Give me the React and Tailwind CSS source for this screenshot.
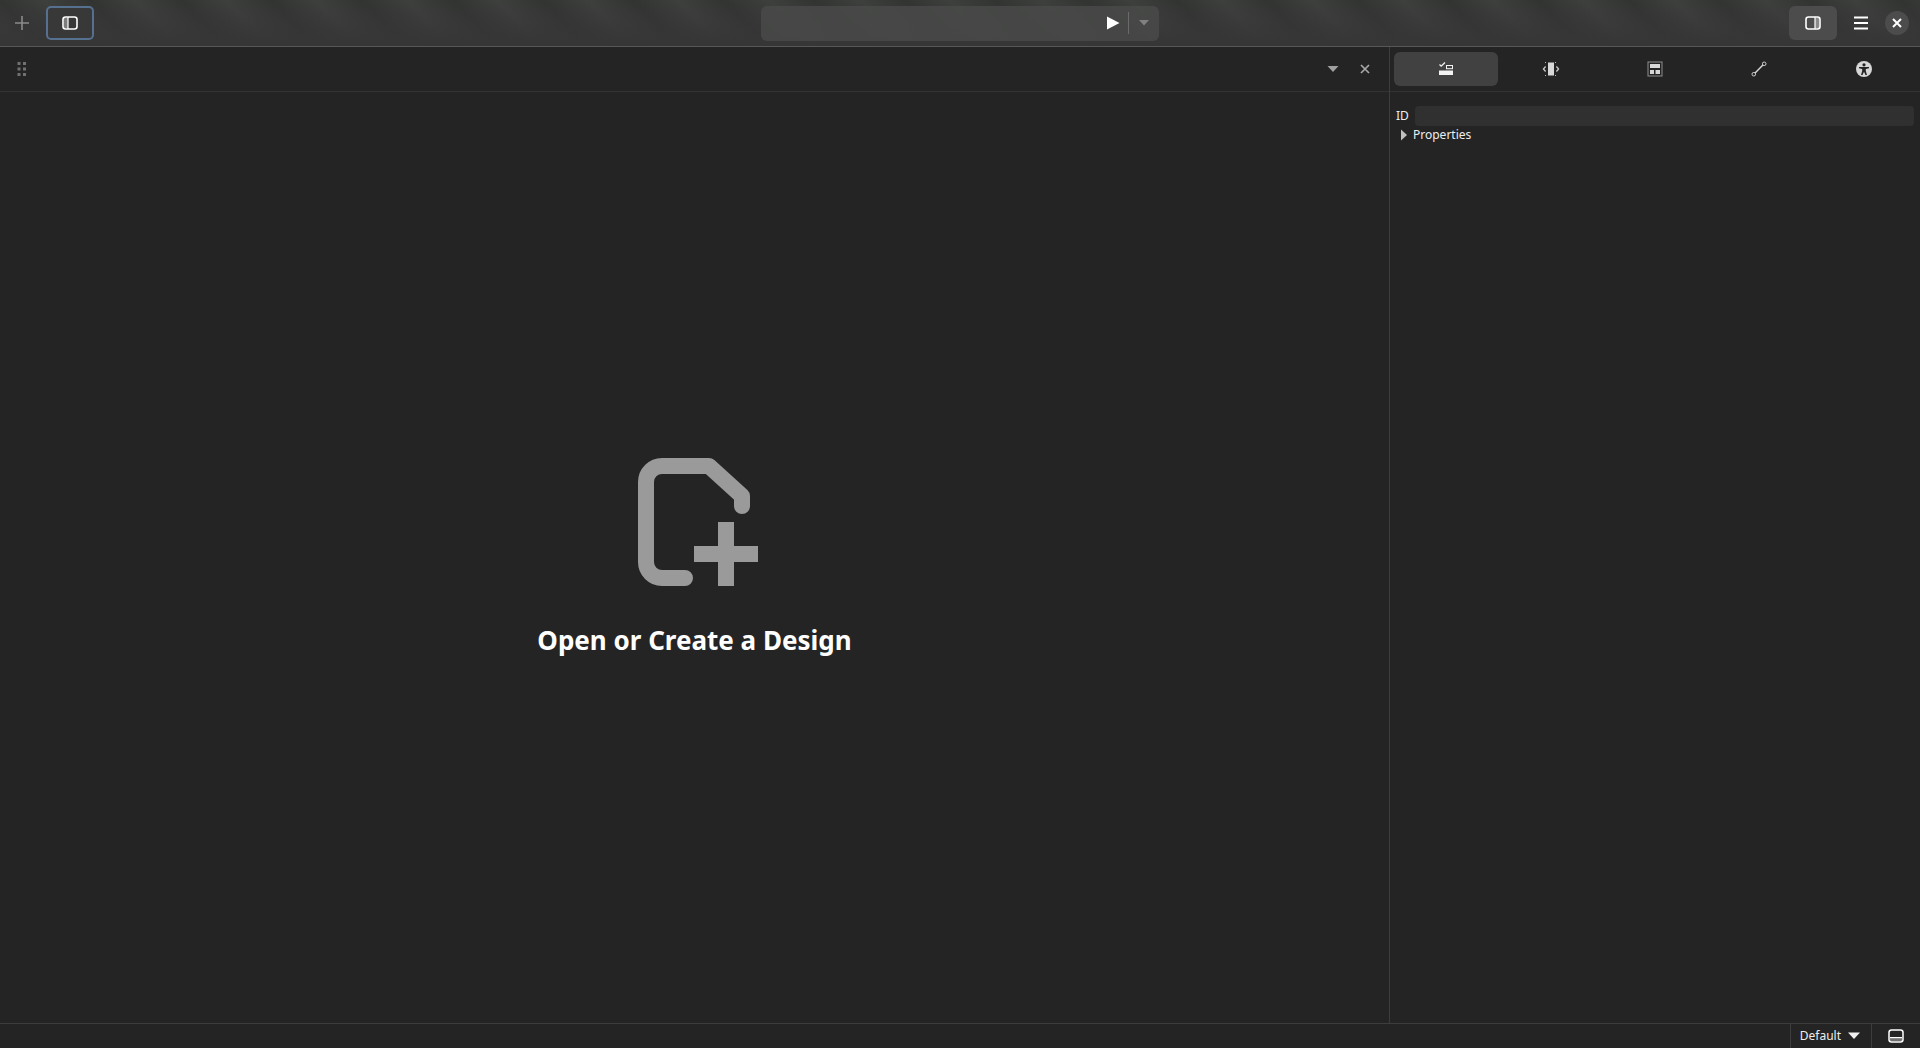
import React from 'react';

const font = { fontFamily: '"Noto Sans", sans-serif' };

const SidebarIcon = ({ side }) => (
  <svg width="16" height="16" viewBox="0 0 16 16" fill="none">
    <rect x="1" y="2" width="14" height="12" rx="2.5" stroke="#fff" strokeWidth="1.6" />
    {side === 'left' ? (
      <>
        <rect x="2" y="3" width="4" height="10" fill="#fff" opacity="0.35" />
        <rect x="5.4" y="2" width="1.2" height="12" fill="#fff" />
      </>
    ) : (
      <>
        <rect x="10" y="3" width="4" height="10" fill="#fff" opacity="0.35" />
        <rect x="9.4" y="2" width="1.2" height="12" fill="#fff" />
      </>
    )}
  </svg>
);

const PropsIcon = () => (
  <svg width="16" height="16" viewBox="0 0 16 16" fill="none">
    <path d="M1.5 3.5 L3.2 5.2 L7 1.5" stroke="#f2f2f2" strokeWidth="1.3" />
    <rect x="8.5" y="4.5" width="6" height="3.2" stroke="#f2f2f2" />
    <rect x="1" y="9.5" width="14" height="4.5" fill="#f2f2f2" />
  </svg>
);

const EventsIcon = () => (
  <svg width="18" height="16" viewBox="0 0 18 16" fill="none">
    <rect x="6" y="1.5" width="6" height="13" fill="#d8d8d8" />
    <path d="M3.6 5.5 L1.4 8 L3.6 10.5 M14.4 5.5 L16.6 8 L14.4 10.5" stroke="#d0d0d0" strokeWidth="1.2" />
    <path d="M3 1.5 H5 M3 14.5 H5 M13 1.5 H15 M13 14.5 H15" stroke="#bbb" strokeWidth="1" strokeDasharray="1 1" />
  </svg>
);

const LayoutIcon = () => (
  <svg width="16" height="16" viewBox="0 0 16 16" fill="none">
    <rect x="1" y="1" width="14" height="14" stroke="#8e8e8e" />
    <rect x="3" y="3" width="10" height="4" fill="#d8d8d8" />
    <rect x="3" y="9" width="4" height="4" fill="#d8d8d8" />
    <rect x="8.5" y="9" width="4.5" height="4" fill="#d8d8d8" />
  </svg>
);

const LinkIcon = () => (
  <svg width="16" height="16" viewBox="0 0 16 16" fill="none">
    <circle cx="2.8" cy="13.2" r="1.8" stroke="#d0d0d0" />
    <circle cx="13.2" cy="2.8" r="1.8" stroke="#d0d0d0" />
    <path d="M4.1 11.9 L11.9 4.1" stroke="#d8d8d8" strokeWidth="1.4" />
  </svg>
);

const AccessIcon = () => (
  <svg width="16" height="16" viewBox="0 0 16 16">
    <circle cx="8" cy="8" r="8" fill="#d6d6d6" />
    <circle cx="8" cy="3.8" r="1.6" fill="#242424" />
    <path d="M3 6 H13 V7.3 L9.8 8 V10 L11 14 H9.5 L8 10.8 L6.5 14 H5 L6.2 10 V8 L3 7.3 Z" fill="#242424" />
  </svg>
);

const tabs = [PropsIcon, EventsIcon, LayoutIcon, LinkIcon, AccessIcon];

export default function App() {
  return (
    <div className="flex h-[1048px] w-[1920px] flex-col overflow-hidden bg-[#242424] text-[#eeeeee]" style={font}>
      {/* header bar */}
      <div className="grid h-[47px] shrink-0 grid-cols-[1fr_398px_1fr] items-center border-b border-[#575757] bg-[linear-gradient(to_bottom,transparent,#363636_95%),repeating-linear-gradient(45deg,#3e403e_0px,#323432_32px,#3e403e_64px)]">
        <div className="flex items-center">
          <button className="ml-[14px] flex h-[16px] w-[16px] items-center justify-center">
            <svg width="16" height="16" viewBox="0 0 16 16">
              <path d="M7.2 1 H8.8 V7.2 H15 V8.8 H8.8 V15 H7.2 V8.8 H1 V7.2 H7.2 Z" fill="#8b8b8b" />
            </svg>
          </button>
          <button className="ml-[16px] flex h-[34px] w-[48px] items-center justify-center rounded-[5px] border-2 border-[#56708f] bg-[#383838]">
            <SidebarIcon side="left" />
          </button>
        </div>
        <div className="flex h-[35px] items-center justify-end rounded-[6px] bg-[#4a4b4a]/80">
          <svg width="14" height="16" viewBox="0 0 14 16">
            <path d="M1 1.5 L13.5 8 L1 14.5 Z" fill="#fff" />
          </svg>
          <div className="ml-[8px] h-[22px] w-px bg-[#6a6a6a]" />
          <svg className="ml-[9px] mr-[9px]" width="12" height="8" viewBox="0 0 12 8">
            <path d="M1 1 H11 L6 6.5 Z" fill="#818181" />
          </svg>
        </div>
        <div className="flex items-center justify-end">
          <button className="flex h-[34px] w-[48px] items-center justify-center rounded-[6px] bg-[#4c4c4c]">
            <SidebarIcon side="right" />
          </button>
          <button className="ml-[8px] flex h-[34px] w-[32px] items-center justify-center">
            <svg width="16" height="14" viewBox="0 0 16 14">
              <path d="M1 1.5 H15 M1 7 H15 M1 12.5 H15" stroke="#fff" strokeWidth="1.8" />
            </svg>
          </button>
          <button className="ml-[8px] mr-[11px] flex h-[24px] w-[24px] items-center justify-center rounded-full bg-[#4c4c4c]">
            <svg width="10" height="10" viewBox="0 0 10 10">
              <path d="M1 1 L9 9 M9 1 L1 9" stroke="#fff" strokeWidth="2" />
            </svg>
          </button>
        </div>
      </div>

      {/* body */}
      <div className="flex min-h-0 flex-1">
        <div className="flex w-[1389px] shrink-0 flex-col">
          <div className="flex h-[45px] shrink-0 items-center border-b border-[#333333]">
            <svg className="ml-[17px]" width="10" height="16" viewBox="0 0 10 16" fill="#707070">
              <rect x="0.5" y="1" width="3" height="3" />
              <rect x="6" y="1" width="3" height="3" />
              <rect x="0.5" y="6.5" width="3" height="3" />
              <rect x="6" y="6.5" width="3" height="3" />
              <rect x="0.5" y="12" width="3" height="3" />
              <rect x="6" y="12" width="3" height="3" />
            </svg>
            <svg className="ml-auto" width="12" height="8" viewBox="0 0 12 8">
              <path d="M0.5 1 H11.5 L6 7 Z" fill="#a0a0a0" />
            </svg>
            <svg className="ml-[21px] mr-[19px]" width="10" height="10" viewBox="0 0 10 10">
              <path d="M1 1 L9 9 M9 1 L1 9" stroke="#a8a8a8" strokeWidth="1.7" />
            </svg>
          </div>
          <div className="flex flex-1 flex-col items-center justify-center">
            <svg className="ml-[7px]" width="120" height="128" viewBox="0 0 120 128" fill="none">
              <path
                d="M47 120 H24 A16 16 0 0 1 8 104 V24 A16 16 0 0 1 24 8 H71 L104 38 V48"
                stroke="#9a9a9a"
                strokeWidth="16"
                strokeLinecap="round"
                strokeLinejoin="round"
              />
              <path d="M80 64 H96 V88 H120 V104 H96 V128 H80 V104 H56 V88 H80 Z" fill="#9a9a9a" />
            </svg>
            <h1 className="mt-[36px] text-[26px] leading-[36px] font-bold text-white">Open or Create a Design</h1>
          </div>
        </div>

        {/* right panel */}
        <div className="flex flex-1 flex-col border-l border-[#3d3d3d]">
          <div className="grid h-[45px] shrink-0 grid-cols-5 items-center border-b border-[#333333] px-[4px]">
            {tabs.map((Icon, i) => (
              <div
                key={i}
                className={
                  i === 0
                    ? 'flex h-[34px] items-center justify-center rounded-[6px] bg-[#414141]'
                    : 'flex h-[34px] items-center justify-center'
                }
              >
                <Icon />
              </div>
            ))}
          </div>
          <div className="flex items-center pt-[14px] pl-[6px] pr-[6px] text-[12px] leading-[20px]">
            <span>ID</span>
            <div className="ml-[6px] h-[20px] flex-1 rounded-[4px] bg-[#303030]" />
          </div>
          <div className="flex items-center pl-[10px] text-[12px] leading-[18px]">
            <svg width="8" height="12" viewBox="0 0 8 12">
              <path d="M1 0.5 L7 6 L1 11.5 Z" fill="#c0c0c0" />
            </svg>
            <span className="ml-[5px]">Properties</span>
          </div>
        </div>
      </div>

      {/* status bar */}
      <div className="flex h-[25px] shrink-0 items-center justify-end border-t border-[#3d3d3d] text-[12px]">
        <div className="flex h-full items-center border-l border-[#3d3d3d] pl-[9px] pr-[11px]">
          <span>Default</span>
          <svg className="ml-[7px]" width="12" height="8" viewBox="0 0 12 8">
            <path d="M0 0.5 H12 L6 7 Z" fill="#f0f0f0" />
          </svg>
        </div>
        <div className="flex h-full w-[49px] items-center justify-center border-l border-[#3d3d3d]">
          <svg width="16" height="16" viewBox="0 0 16 16" fill="none">
            <rect x="1" y="2" width="14" height="12" rx="2.5" stroke="#fff" strokeWidth="1.5" />
            <rect x="2" y="9" width="12" height="1.2" fill="#fff" />
            <rect x="2" y="10" width="12" height="3" fill="#fff" opacity="0.35" />
          </svg>
        </div>
      </div>
    </div>
  );
}
